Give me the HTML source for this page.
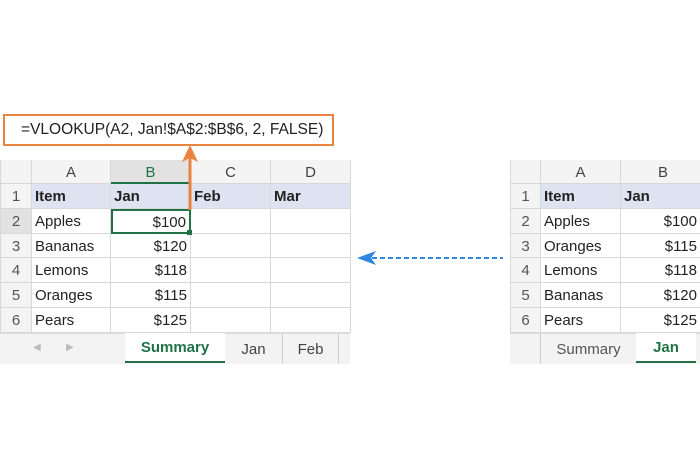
<!DOCTYPE html>
<html><head><style>
body{margin:0;width:700px;height:450px;background:#fff;position:relative;overflow:hidden;font-family:"Liberation Sans",sans-serif;}
.a{position:absolute;}
.g{position:absolute;display:grid;grid-template-rows:24px repeat(6,24.8px);font-size:15px;color:#222;border-left:1px solid #d8d8d8;}
.g div{border-right:1px solid #d8d8d8;border-bottom:1px solid #d8d8d8;padding:0 3px;white-space:nowrap;line-height:26px;box-sizing:border-box;overflow:hidden;}
.h{background:#f4f4f4;text-align:center;color:#444;}
.n{background:#f4f4f4;text-align:center;color:#555;}
.b{background:#dde3f1;font-weight:bold;}
.r{text-align:right;}
</style></head><body>
<div class="a" style="left:3px;top:114px;width:327px;height:28px;border:2px solid #e8843f;line-height:28px;color:#222;overflow:hidden"><span style="display:inline-block;white-space:nowrap;font-size:16px;transform:scaleX(0.97);transform-origin:0 50%;margin-left:16px">=VLOOKUP(A2, Jan!$A$2:$B$6, 2, FALSE)</span></div>

<div class="g" style="left:0;top:160px;width:350px;grid-template-columns:31px 79px 80px 80px 80px">
<div class="h"></div><div class="h">A</div><div class="h" style="background:#e2e2e2;color:#217346;border-bottom:2px solid #217346">B</div><div class="h">C</div><div class="h">D</div>
<div class="n">1</div><div class="b">Item</div><div class="b">Jan</div><div class="b">Feb</div><div class="b">Mar</div>
<div class="n" style="background:#e2e2e2">2</div><div>Apples</div><div class="r" style="border:2px solid #217346;line-height:23px">$100</div><div></div><div></div>
<div class="n">3</div><div>Bananas</div><div class="r">$120</div><div></div><div></div>
<div class="n">4</div><div>Lemons</div><div class="r">$118</div><div></div><div></div>
<div class="n">5</div><div>Oranges</div><div class="r">$115</div><div></div><div></div>
<div class="n">6</div><div>Pears</div><div class="r">$125</div><div></div><div></div>
</div>
<div class="a" style="left:187px;top:230px;width:5px;height:5px;background:#217346"></div>
<div class="a" style="left:0;top:333px;width:350px;height:30px;background:#f3f3f3;border-top:1px solid #ddd;font-size:15px">
 <span class="a" style="left:33px;top:8px;color:#bbb;font-size:10px">◀</span><span class="a" style="left:66px;top:8px;color:#bbb;font-size:10px">▶</span>
 <div class="a" style="left:125px;top:-1px;width:100px;height:28px;background:#fff;border-bottom:2px solid #217346;color:#217346;font-weight:bold;text-align:center;line-height:30px">Summary</div>
 <div class="a" style="left:225px;top:0;width:57px;height:29px;text-align:center;line-height:31px;color:#444;border-right:1px solid #ccc">Jan</div>
 <div class="a" style="left:283px;top:0;width:55px;height:29px;text-align:center;line-height:31px;color:#444;border-right:1px solid #ccc">Feb</div>
</div>

<svg class="a" style="left:0;top:0" width="700" height="450">
<line x1="190" y1="158" x2="190" y2="210" stroke="#e8843f" stroke-width="3"/>
<polygon points="190,145 182,162 190,158 198,162" fill="#e8843f"/>
<line x1="372" y1="258" x2="503" y2="258" stroke="#2f86e0" stroke-width="2" stroke-dasharray="5,3"/>
<polygon points="357,258 376,251 371,258 376,265" fill="#2f86e0"/>
</svg>

<div class="g" style="left:510px;top:160px;width:195px;grid-template-columns:30px 80px 85px">
<div class="h"></div><div class="h">A</div><div class="h">B</div>
<div class="n">1</div><div class="b">Item</div><div class="b">Jan</div>
<div class="n">2</div><div>Apples</div><div class="r" style="padding-right:8px">$100</div>
<div class="n">3</div><div>Oranges</div><div class="r" style="padding-right:8px">$115</div>
<div class="n">4</div><div>Lemons</div><div class="r" style="padding-right:8px">$118</div>
<div class="n">5</div><div>Bananas</div><div class="r" style="padding-right:8px">$120</div>
<div class="n">6</div><div>Pears</div><div class="r" style="padding-right:8px">$125</div>
</div>
<div class="a" style="left:510px;top:333px;width:190px;height:30px;background:#f3f3f3;border-top:1px solid #ddd;font-size:15px">
 <div class="a" style="left:30px;top:0;width:95px;height:29px;text-align:center;line-height:31px;color:#555;border-left:1px solid #ccc;border-right:1px solid #ccc">Summary</div>
 <div class="a" style="left:126px;top:-1px;width:60px;height:28px;background:#fff;border-bottom:2px solid #217346;color:#217346;font-weight:bold;text-align:center;line-height:30px">Jan</div>
</div>
</body></html>
